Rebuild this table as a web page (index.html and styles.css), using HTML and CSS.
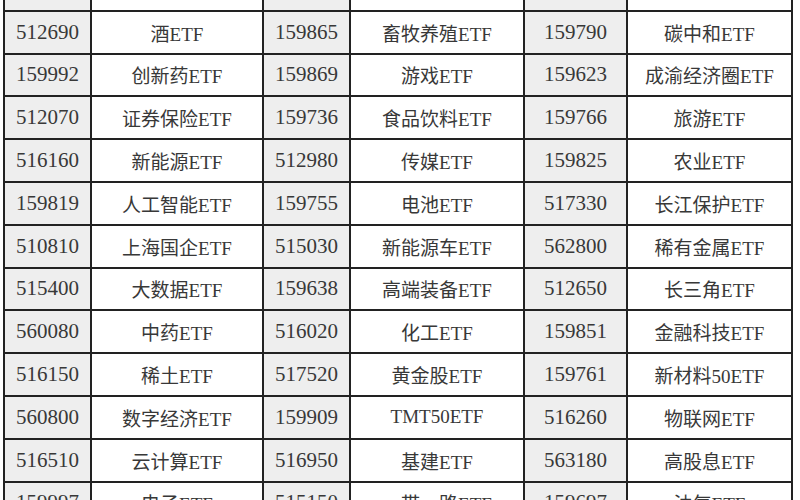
FILE: index.html
```html
<!DOCTYPE html>
<html lang="zh-CN">
<head>
<meta charset="utf-8">
<link rel="stylesheet" href="styles.css">
</head>
<body>
<div class="frame">
  <div class="grid">
    <div class="c code">512480</div><div class="c name">半导体ETF</div><div class="c code">159745</div><div class="c name">建材ETF</div><div class="c code">159611</div><div class="c name">电力ETF</div>
    <div class="c code">512690</div><div class="c name">酒ETF</div><div class="c code">159865</div><div class="c name">畜牧养殖ETF</div><div class="c code">159790</div><div class="c name">碳中和ETF</div>
    <div class="c code">159992</div><div class="c name">创新药ETF</div><div class="c code">159869</div><div class="c name">游戏ETF</div><div class="c code">159623</div><div class="c name">成渝经济圈ETF</div>
    <div class="c code">512070</div><div class="c name">证券保险ETF</div><div class="c code">159736</div><div class="c name">食品饮料ETF</div><div class="c code">159766</div><div class="c name">旅游ETF</div>
    <div class="c code">516160</div><div class="c name">新能源ETF</div><div class="c code">512980</div><div class="c name">传媒ETF</div><div class="c code">159825</div><div class="c name">农业ETF</div>
    <div class="c code">159819</div><div class="c name">人工智能ETF</div><div class="c code">159755</div><div class="c name">电池ETF</div><div class="c code">517330</div><div class="c name">长江保护ETF</div>
    <div class="c code">510810</div><div class="c name">上海国企ETF</div><div class="c code">515030</div><div class="c name">新能源车ETF</div><div class="c code">562800</div><div class="c name">稀有金属ETF</div>
    <div class="c code">515400</div><div class="c name">大数据ETF</div><div class="c code">159638</div><div class="c name">高端装备ETF</div><div class="c code">512650</div><div class="c name">长三角ETF</div>
    <div class="c code">560080</div><div class="c name">中药ETF</div><div class="c code">516020</div><div class="c name">化工ETF</div><div class="c code">159851</div><div class="c name">金融科技ETF</div>
    <div class="c code">516150</div><div class="c name">稀土ETF</div><div class="c code">517520</div><div class="c name">黄金股ETF</div><div class="c code">159761</div><div class="c name">新材料50ETF</div>
    <div class="c code">560800</div><div class="c name">数字经济ETF</div><div class="c code">159909</div><div class="c name">TMT50ETF</div><div class="c code">516260</div><div class="c name">物联网ETF</div>
    <div class="c code">516510</div><div class="c name">云计算ETF</div><div class="c code">516950</div><div class="c name">基建ETF</div><div class="c code">563180</div><div class="c name">高股息ETF</div>
    <div class="c code">159997</div><div class="c name">电子ETF</div><div class="c code">515150</div><div class="c name">一带一路ETF</div><div class="c code">159697</div><div class="c name">油气ETF</div>
  </div>
</div>
</body>
</html>
```

FILE: styles.css
```css
html, body {
  margin: 0;
  padding: 0;
  background: #ffffff;
}
.frame {
  width: 800px;
  height: 500px;
  overflow: hidden;
}
.grid {
  display: grid;
  grid-template-columns: 85px 170px 85px 172px 101px 163px;
  grid-auto-rows: 40.8px;
  gap: 2px;
  padding: 2px;
  background: #222222;
  width: max-content;
  margin: -33px 0 0 3px;
}
.c {
  display: flex;
  align-items: center;
  justify-content: center;
  font-family: "Liberation Serif", "Noto Sans CJK SC", serif;
  color: #383838;
  white-space: nowrap;
}
.code {
  background: #eeeeee;
  font-size: 21px;
}
.name {
  background: #ffffff;
  font-size: 19px;
}
```
